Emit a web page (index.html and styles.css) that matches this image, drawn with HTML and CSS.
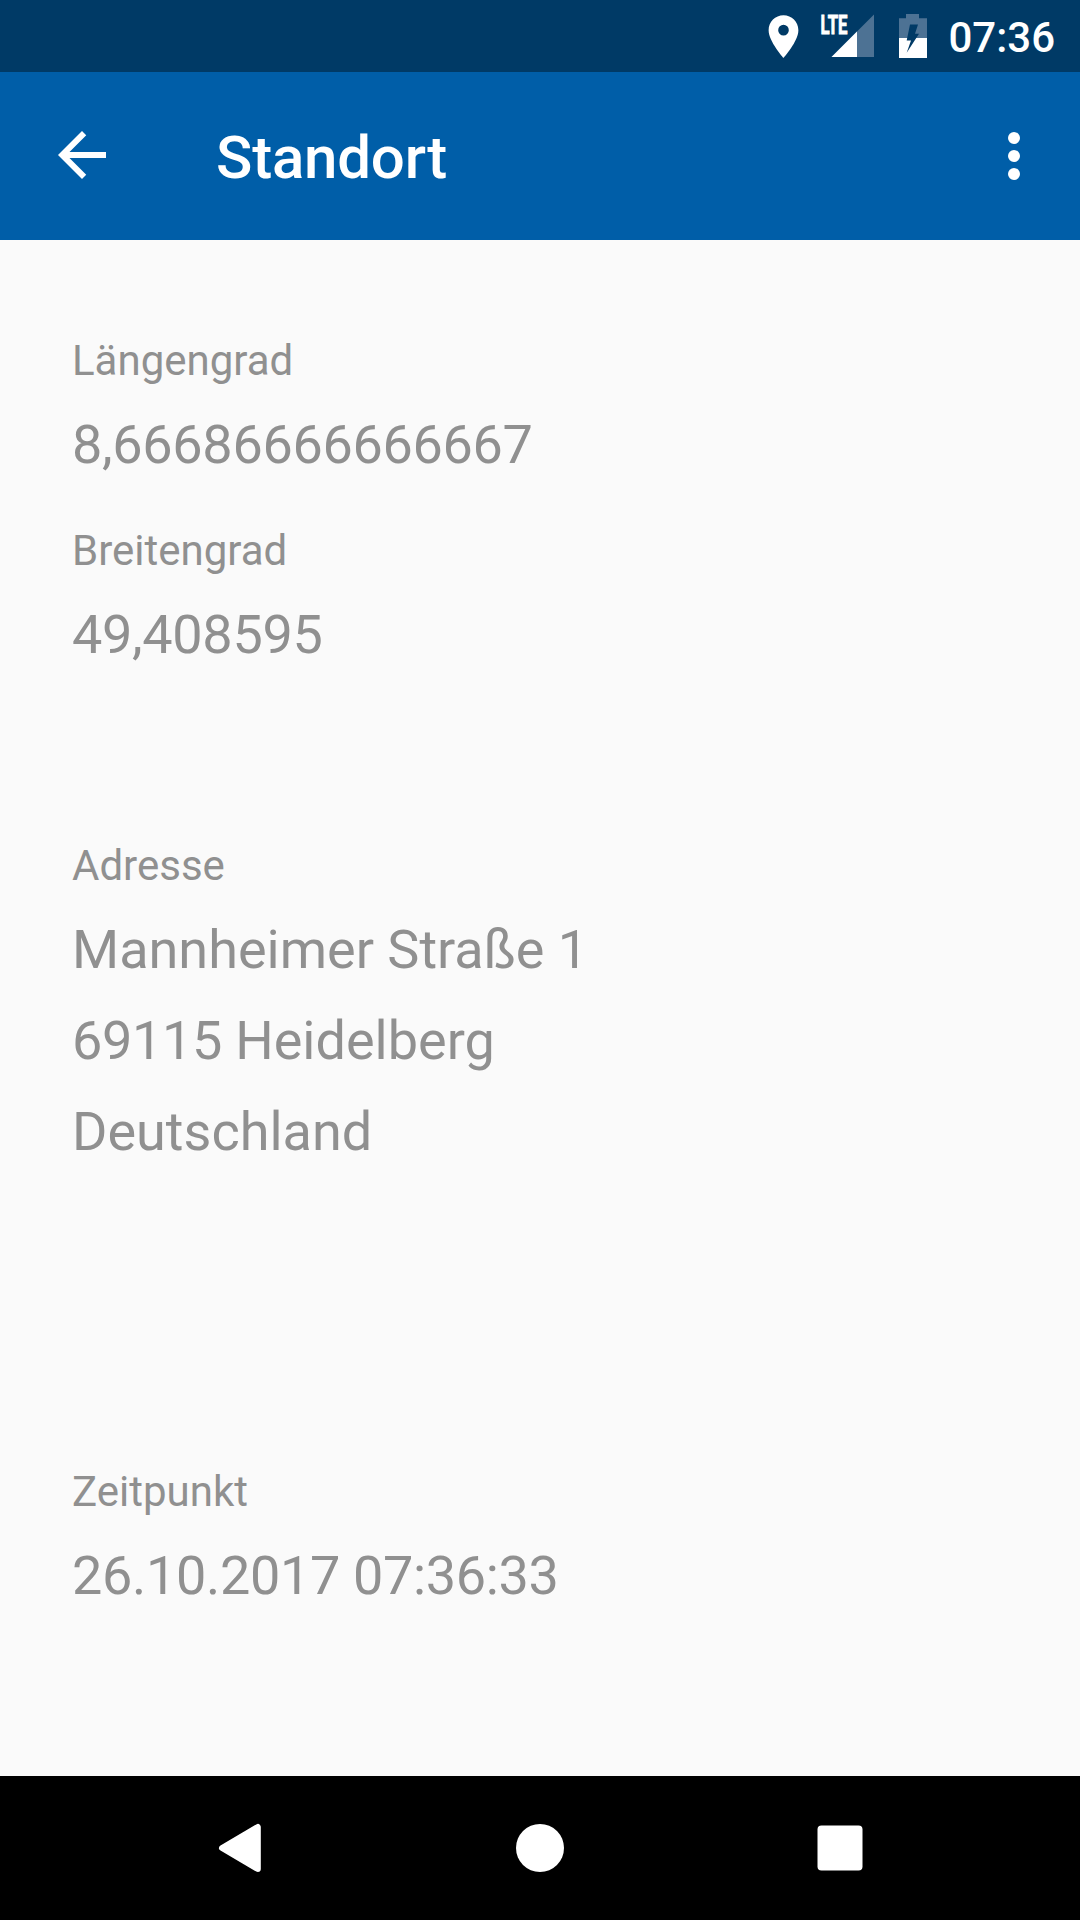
FILE: index.html
```html
<!DOCTYPE html>
<html lang="de">
<head>
<meta charset="utf-8">
<title>Standort</title>
<link rel="stylesheet" href="styles.css">
</head>
<body>
<div class="screen">
  <div class="status-bar">
    <svg class="status-pin" viewBox="0 0 24 24"><path fill="#fff" d="M12 2C8.13 2 5 5.13 5 9c0 5.25 7 13 7 13s7-7.75 7-13c0-3.87-3.13-7-7-7zm0 9.5a2.5 2.5 0 1 1 0-5 2.5 2.5 0 0 1 0 5z"/></svg>
    <svg class="status-signal" viewBox="-6 -8 60 60">
      <path fill="#4d7294" d="M53 0.5V43H10.500z"/>
      <path fill="#fff" d="M36 17.500V43H10.500z"/>
      <text class="lte" x="-0.500" y="19.700" textLength="27" lengthAdjust="spacingAndGlyphs">LTE</text>
    </svg>
    <svg class="status-battery" viewBox="0 0 28 44">
      <path fill="#4d7294" d="M7 0H20V4.300H28V24H0V4.300H7z"/>
      <path fill="#fff" d="M0 24H28V44H0z"/>
      <path fill="#003a66" d="M11 10.500H19L16 19.800H20L7.700 38.700L12 26.500H7.700z"/>
    </svg>
    <span class="clock">07:36</span>
  </div>
  <header class="app-bar">
    <svg class="back-arrow" viewBox="0 0 24 24"><path fill="#fff" d="M20 11H7.830l5.590-5.590L12 4l-8 8 8 8 1.410-1.410L7.830 13H20z"/></svg>
    <h1 class="title">Standort</h1>
    <svg class="overflow" viewBox="0 0 12 48"><g fill="#fff"><circle cx="6" cy="6" r="6"/><circle cx="6" cy="24" r="6"/><circle cx="6" cy="42" r="6"/></g></svg>
  </header>
  <main class="content">
    <section class="field">
      <div class="label">Längengrad</div>
      <div class="value numeric">8,66686666666667</div>
    </section>
    <section class="field">
      <div class="label">Breitengrad</div>
      <div class="value numeric">49,408595</div>
    </section>
    <section class="field address">
      <div class="label">Adresse</div>
      <div class="value">Mannheimer Straße 1</div>
      <div class="value"><span class="numeric">69115 </span>Heidelberg</div>
      <div class="value">Deutschland</div>
    </section>
    <section class="field">
      <div class="label">Zeitpunkt</div>
      <div class="value numeric">26.10.2017 07:36:33</div>
    </section>
  </main>
  <nav class="nav-bar">
    <svg class="nav-icon" viewBox="0 0 60 60"><path fill="#fff" stroke="#fff" stroke-width="6" stroke-linejoin="round" d="M12 30L47.800 9V51z"/></svg>
    <svg class="nav-icon" viewBox="0 0 60 60"><circle cx="30" cy="30" r="24" fill="#fff"/></svg>
    <svg class="nav-icon" viewBox="0 0 60 60"><rect x="7.500" y="7.500" width="45" height="45" rx="4" fill="#fff"/></svg>
  </nav>
</div>
</body>
</html>
```
FILE: styles.css
```css
* {
  box-sizing: border-box;
}

body {
  margin: 0;
  font-family: Roboto, "Liberation Sans", sans-serif;
}

svg {
  display: block;
  flex: none;
}

.screen {
  width: 1080px;
  height: 1920px;
  display: flex;
  flex-direction: column;
  background: #fafafa;
}

.status-bar {
  height: 72px;
  display: flex;
  justify-content: flex-end;
  align-items: center;
  padding-right: 25px;
  background: #003a66;
}

.status-pin {
  width: 51px;
  height: 51px;
  margin-right: 6px;
}

.status-signal {
  width: 60px;
  height: 60px;
  margin-right: 24px;
}

.status-battery {
  width: 28px;
  height: 44px;
  margin-right: 21px;
}

.lte {
  font-size: 26px;
  font-weight: 700;
  fill: #fff;
  stroke: #fff;
  stroke-width: 0.9px;
}

.clock {
  font-size: 42px;
  font-weight: 500;
  line-height: 48px;
  padding-top: 3px;
  color: #fff;
}

.app-bar {
  height: 168px;
  display: flex;
  align-items: center;
  padding: 0 60px 0 46px;
  background: #005ea8;
}

.back-arrow {
  width: 72px;
  height: 72px;
  margin: 0 98px 2px 0;
}

.title {
  flex: 1;
  margin: 0;
  padding-top: 3px;
  font-size: 60px;
  font-weight: 500;
  line-height: 70px;
  letter-spacing: -0.2px;
  color: #fff;
}

.overflow {
  width: 12px;
  height: 48px;
}

.content {
  flex: 1;
  padding: 91px 72px 0;
  color: #909090;
}

.field {
  margin-bottom: 31px;
}

.label {
  margin-bottom: 8px;
  font-size: 42px;
  line-height: 60px;
}

.value {
  font-size: 54px;
  line-height: 91px;
}

.numeric {
  letter-spacing: -0.33px;
}

.address {
  margin: 156px 0 285px;
}

.nav-bar {
  height: 144px;
  display: flex;
  align-items: center;
  justify-content: center;
  gap: 240px;
  background: #000;
}

.nav-icon {
  width: 60px;
  height: 60px;
}
```
